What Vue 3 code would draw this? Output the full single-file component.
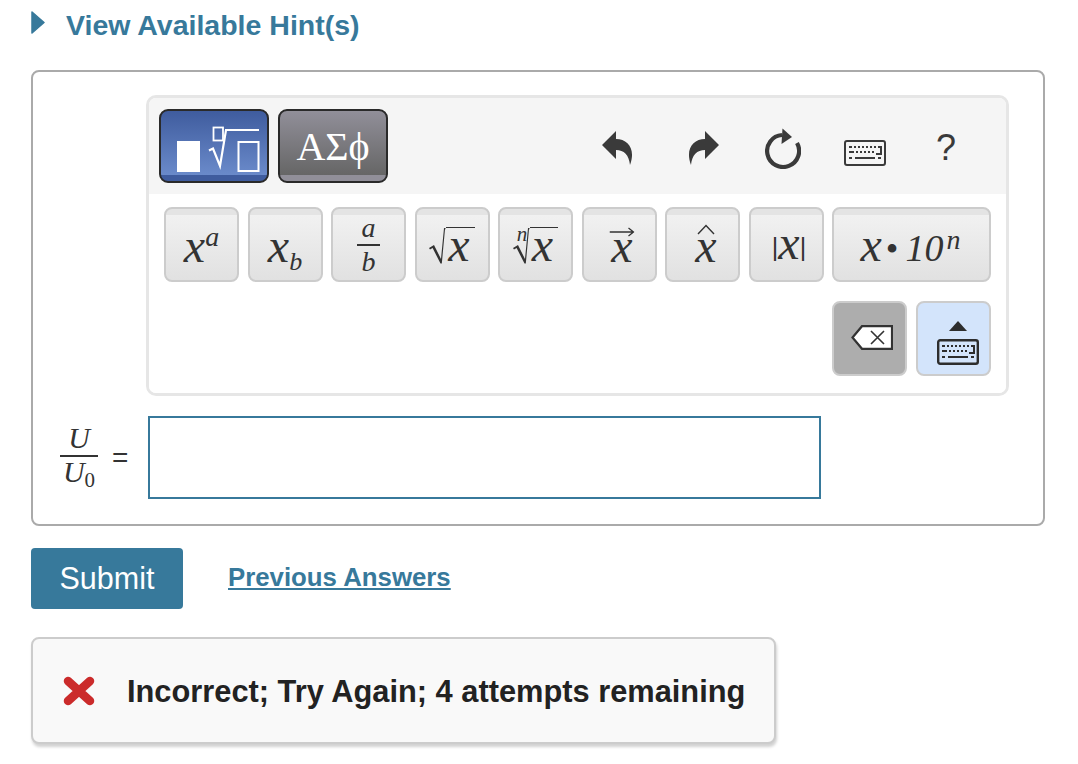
<script setup>
const hint = 'View Available Hint(s)'
const kbPath = 'M5 7h3M10 7h2M14 7h2M18 7h2M22 7h2M26 7h2M30 7h2M34 7h3v7h-5M5 12h5M12 12h2M16 12h2M20 12h2M24 12h2M28 12h2M5 18h3M11 18h20M34 18h3'
const radical = 'M0 22 L5 19 L12 33 L15 2 H16.500 V3.200 H16 L12.800 37.500 H11.500 L3.600 22 L1 23.500 Z'
</script>

<template>
  <div class="page">
    <header class="hint">
      <svg class="caret" width="14" height="23" viewBox="0 0 14 23"><path d="M1 1 L13 11.5 L1 22 Z" fill="#37799b" stroke="#37799b" stroke-width="1.5" stroke-linejoin="round"/></svg>
      <span class="hint-text">{{ hint }}</span>
    </header>

    <section class="answer">
      <div class="toolbar">
        <div class="top">
          <div class="tab tab-blue">
            <svg width="110" height="74" viewBox="0 0 110 74" class="tab-svg">
              <rect x="18" y="32" width="23" height="31" fill="#fff"/>
              <rect x="54.500" y="18.500" width="9.500" height="13" fill="none" stroke="#fff" stroke-width="1.800"/>
              <path d="M50 41.500 L54 39.500 L61 57 L67 21 H100" fill="none" stroke="#fff" stroke-width="2.200"/>
              <rect x="79.500" y="33" width="20" height="29" fill="none" stroke="#fff" stroke-width="2"/>
            </svg>
          </div>
          <div class="tab tab-grey"><span>ΑΣϕ</span></div>
          <div class="tools">
            <svg class="undo" width="31" height="35" viewBox="0 0 31 35"><path d="M0 15 L14 1 V9 C26 9 34 19 28 35 C27 25 22 20 14 20 V29 Z" fill="#3a3a3a"/></svg>
            <svg class="redo" width="31" height="35" viewBox="0 0 31 35"><path d="M31 15 L17 1 V9 C5 9 -3 19 3 35 C4 25 9 20 17 20 V29 Z" fill="#3a3a3a"/></svg>
            <svg class="reload" width="36" height="41" viewBox="0 0 36 41">
              <path d="M32 15 A16 16 0 1 1 17 7" fill="none" stroke="#3a3a3a" stroke-width="4.200"/>
              <path d="M17.500 0.500 L27 9 L16.500 16 Z" fill="#3a3a3a"/>
            </svg>
            <svg class="kbd" width="42" height="26" viewBox="0 0 42 26">
              <rect x="1" y="1" width="40" height="24" rx="2" fill="#f5f5f5" stroke="#3a3a3a" stroke-width="2"/>
              <path :d="kbPath" stroke="#3a3a3a" stroke-width="2" fill="none"/>
            </svg>
            <span class="help">?</span>
          </div>
        </div>

        <div class="keys">
          <div class="row">
            <button class="key"><span class="m big">x<sup>a</sup></span></button>
            <button class="key"><span class="m big">x<sub>b</sub></span></button>
            <button class="key"><span class="frac-key m"><span>a</span><i class="bar"></i><span>b</span></span></button>
            <button class="key">
              <span class="root m">
                <svg width="17" height="38" viewBox="0 0 17 38"><path :d="radical" fill="#333"/></svg><span class="rad">x</span>
              </span>
            </button>
            <button class="key">
              <span class="root m">
                <span class="idx">n</span>
                <svg width="17" height="38" viewBox="0 0 17 38"><path :d="radical" fill="#333"/></svg><span class="rad">x</span>
              </span>
            </button>
            <button class="key">
              <span class="accent vec m big">
                <svg width="25" height="10" viewBox="0 0 25 10"><path d="M0 5 H24 M19 1 L24 5 L19 9" fill="none" stroke="#333" stroke-width="1.300"/></svg>x
              </span>
            </button>
            <button class="key">
              <span class="accent hat m big">
                <svg width="18" height="11" viewBox="0 0 18 11"><path d="M1 10 L9 1.500 L17 10" fill="none" stroke="#333" stroke-width="1.400"/></svg>x
              </span>
            </button>
            <button class="key"><span class="m big abs"><b>|</b>x<b>|</b></span></button>
            <button class="key wide"><span class="m big sci">x<em>•</em><span class="ten">10</span><sup>n</sup></span></button>
          </div>
          <div class="row end">
            <button class="key dark">
              <svg class="bksp" width="42" height="25" viewBox="0 0 42 25">
                <path d="M1.500 12.500 L11 1.200 H41 V23.800 H11 Z" fill="#fff" stroke="#333" stroke-width="2.200"/>
                <path d="M20 6 L33 19 M33 6 L20 19" stroke="#333" stroke-width="1.600"/>
              </svg>
            </button>
            <button class="key light">
              <span class="kb-up">
                <svg width="18" height="10" viewBox="0 0 18 10"><path d="M9 0 L18 10 H0 Z" fill="#2d2d2d"/></svg>
                <svg width="42" height="26" viewBox="0 0 42 26">
                  <rect x="1.200" y="1.200" width="39.600" height="23.600" rx="2" fill="none" stroke="#2d2d2d" stroke-width="2.400"/>
                  <path :d="kbPath" stroke="#2d2d2d" stroke-width="2" fill="none"/>
                </svg>
              </span>
            </button>
          </div>
        </div>
      </div>

      <div class="eq">
        <div class="label">
          <span class="frac m"><span class="num">U</span><i class="bar"></i><span class="den">U<sub>0</sub></span></span>
          <span class="equals">=</span>
        </div>
        <div class="input"></div>
      </div>
    </section>

    <div class="actions">
      <button class="submit">Submit</button>
      <a class="prev">Previous Answers</a>
    </div>

    <div class="feedback">
      <svg width="32" height="30" viewBox="0 0 32 30"><path d="M5 5 L27 25 M27 5 L5 25" stroke="#cb2b2b" stroke-width="8.500" stroke-linecap="round"/></svg>
      <span class="msg">Incorrect; Try Again; 4 attempts remaining</span>
    </div>
  </div>
</template>

<style>
html, body { margin: 0; background: #fff; }
</style>

<style scoped>
.page {
  width: 1078px;
  height: 764px;
  box-sizing: border-box;
  padding: 0 0 0 31px;
  font-family: "Liberation Sans", Arial, sans-serif;
  overflow: hidden;
}
.hint { display: flex; align-items: center; height: 50px; gap: 21px; color: #37799b; }
.caret { margin-top: -6px; }
.hint-text { font-size: 28.500px; font-weight: 700; }
.answer {
  margin-top: 20px;
  width: 1014px;
  height: 456px;
  box-sizing: border-box;
  border: 2px solid #aaa;
  border-radius: 8px;
  padding: 23px 0 0 113px;
}
.toolbar {
  width: 863px;
  box-sizing: border-box;
  border: 3px solid #e6e6e6;
  border-radius: 10px;
  overflow: hidden;
}
.top {
  height: 96px;
  box-sizing: border-box;
  background: #f5f5f5;
  padding: 11px 0 0 10px;
  display: flex;
  align-items: flex-start;
  gap: 9px;
}
.tab {
  width: 110px;
  height: 74px;
  box-sizing: border-box;
  border: 2px solid #2a2a2a;
  border-radius: 9px;
  display: flex;
  align-items: center;
  justify-content: center;
  position: relative;
  overflow: hidden;
}
.tab-blue {
  background: linear-gradient(#3f5c9e, #6a8aca 91%, #3f5c9e 91%);
}
.tab-svg { position: absolute; left: -2px; top: -2px; }
.tab-grey {
  background: linear-gradient(#918f99, #666 91%, #918f99 91%);
  color: #fff;
  font-family: "Liberation Serif", serif;
  font-size: 40px;
}
.tools { display: flex; align-items: center; height: 76px; }
.undo { margin-left: 205px; }
.redo { margin-left: 55px; }
.reload { margin-left: 46px; margin-top: 2px; }
.kbd { margin-left: 43px; margin-top: 12px; }
.help { margin-left: 50px; font-size: 36px; color: #3a3a3a; line-height: 1; margin-top: 2px; }

.keys {
  padding: 13px 15px 17px;
  display: flex;
  flex-direction: column;
  gap: 19px;
  background: #fff;
}
.row { display: flex; gap: 8.500px; }
.row.end { justify-content: flex-end; gap: 9px; }
.key {
  width: 75px;
  height: 75px;
  padding: 0;
  box-sizing: border-box;
  border: 2px solid #ccc;
  border-radius: 8px;
  background: linear-gradient(#e4e4e4 6px, #f1f1f1 6px, #e1e1e1);
  color: #333;
  display: flex;
  align-items: center;
  justify-content: center;
}
.key.wide { width: 159px; }
.key.dark { background: #adadad; }
.key.light { background: #d3e4fb; }
.m { font-family: "Liberation Serif", serif; font-style: italic; color: #333; }
.big { font-size: 48px; line-height: 48px; padding-top: 3px; white-space: nowrap; }
.big sup { font-size: 28px; vertical-align: 16px; line-height: 0; }
.big sub { font-size: 26px; vertical-align: -8px; line-height: 0; }
.frac-key { display: flex; flex-direction: column; align-items: center; font-size: 28px; line-height: 1; width: 23px; gap: 2px; }
.bar { display: block; width: 100%; height: 2px; background: #333; }
.root { display: flex; align-items: flex-start; position: relative; height: 38px; }
.root svg { display: block; }
.rad { font-size: 48px; border-top: 1.500px solid #333; margin-top: 1.500px; line-height: 34px; height: 36px; padding: 0 5px 0 2px; }
.idx { position: absolute; left: 4px; top: -2px; font-size: 21px; line-height: 1; }
.accent { position: relative; display: inline-block; }
.accent svg { position: absolute; left: 50%; transform: translateX(-50%); }
.vec { margin-left: 6px; }
.vec svg { top: 8px; }
.hat { margin-left: 7px; }
.hat svg { top: 5px; }
.abs { margin-left: 6px; }
.abs b { font-family: "Liberation Sans", sans-serif; font-style: normal; font-weight: 400; font-size: 25px; position: relative; top: -3px; }
.sci { margin-left: -2px; }
.sci em { font-style: normal; font-size: 36px; line-height: 0; margin: 0 7px 0 4px; }
.sci .ten { font-size: 38px; }
.sci sup { font-size: 28px; vertical-align: 12px; margin-left: 3px; }
.kb-up { display: flex; flex-direction: column; align-items: center; gap: 8px; margin: 8px 0 0 9px; }
.kb-up svg { display: block; }
.bksp { margin: -2px 0 0 4px; }

.eq { display: flex; align-items: flex-start; margin-top: 20px; margin-left: -113px; }
.label { width: 115px; height: 83px; display: flex; align-items: center; box-sizing: border-box; padding: 0 0 0 27px; }
.frac { display: flex; flex-direction: column; align-items: center; width: 38px; font-size: 30px; margin-top: -4px; }
.num { line-height: 26px; }
.den { line-height: 30px; }
.frac .bar { height: 2px; margin: 4px 0 0; }
.frac sub { font-size: 21px; font-style: normal; line-height: 0; vertical-align: -5px; }
.equals { margin-left: 14px; font-size: 28px; color: #333; font-family: "Liberation Sans", sans-serif; margin-top: 0; }
.input { width: 673px; height: 83px; box-sizing: border-box; border: 2px solid #37799b; background: #fff; }

.actions { display: flex; align-items: center; margin-top: 22px; gap: 45px; }
.submit {
  width: 152px;
  height: 61px;
  border: 0;
  border-radius: 4px;
  background: #37799b;
  color: #fff;
  font-family: inherit;
  font-size: 30.500px;
  padding: 0;
}
.prev { color: #37799b; font-size: 25.800px; font-weight: 700; text-decoration: underline; margin-top: -2px; }

.feedback {
  margin-top: 28px;
  width: 745px;
  height: 107px;
  box-sizing: border-box;
  border: 2px solid #ccc;
  border-radius: 8px;
  background: #f9f9f9;
  box-shadow: 1px 3px 3px rgba(0,0,0,.18);
  display: flex;
  align-items: center;
  padding-left: 30px;
  gap: 32px;
  font-size: 30.800px;
  font-weight: 700;
  color: #222;
  white-space: nowrap;
}
.msg { padding-top: 2px; }
</style>
